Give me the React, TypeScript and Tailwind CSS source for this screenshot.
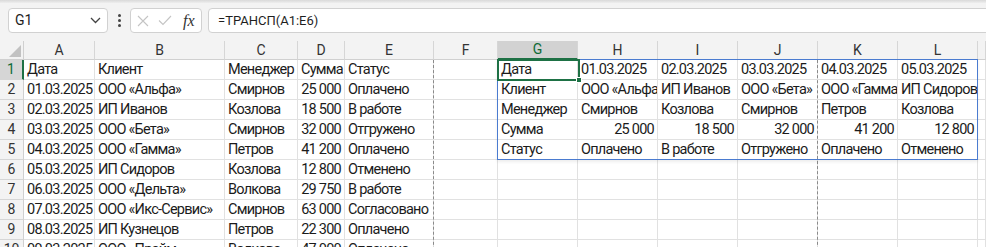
import React from 'react';

const COLS = ['A', 'B', 'C', 'D', 'E', 'F', 'G', 'H', 'I', 'J', 'K', 'L', ''];

const DATA: string[][] = [
  ['Дата', 'Клиент', 'Менеджер', 'Сумма', 'Статус', '', 'Дата', '01.03.2025', '02.03.2025', '03.03.2025', '04.03.2025', '05.03.2025', ''],
  ['01.03.2025', 'ООО «Альфа»', 'Смирнов', '25 000', 'Оплачено', '', 'Клиент', 'ООО «Альфа»', 'ИП Иванов', 'ООО «Бета»', 'ООО «Гамма»', 'ИП Сидоров', ''],
  ['02.03.2025', 'ИП Иванов', 'Козлова', '18 500', 'В работе', '', 'Менеджер', 'Смирнов', 'Козлова', 'Смирнов', 'Петров', 'Козлова', ''],
  ['03.03.2025', 'ООО «Бета»', 'Смирнов', '32 000', 'Отгружено', '', 'Сумма', '25 000', '18 500', '32 000', '41 200', '12 800', ''],
  ['04.03.2025', 'ООО «Гамма»', 'Петров', '41 200', 'Оплачено', '', 'Статус', 'Оплачено', 'В работе', 'Отгружено', 'Оплачено', 'Отменено', ''],
  ['05.03.2025', 'ИП Сидоров', 'Козлова', '12 800', 'Отменено', '', '', '', '', '', '', '', ''],
  ['06.03.2025', 'ООО «Дельта»', 'Волкова', '29 750', 'В работе', '', '', '', '', '', '', '', ''],
  ['07.03.2025', 'ООО «Икс-Сервис»', 'Смирнов', '63 000', 'Согласовано', '', '', '', '', '', '', '', ''],
  ['08.03.2025', 'ИП Кузнецов', 'Петров', '22 300', 'Оплачено', '', '', '', '', '', '', '', ''],
  ['09.03.2025', 'ООО «Прайм»', 'Волкова', '47 000', 'Оплачено', '', '', '', '', '', '', '', ''],
];

const isNum = (s: string) => /^\d+ \d+$/.test(s);

function Chevron() {
  return (
    <svg width="11" height="7" viewBox="0 0 11 7" fill="none">
      <path d="M1 1l4.5 4.5L10 1" stroke="#444" strokeWidth="1.3" />
    </svg>
  );
}

export default function App() {
  return (
    <div className="w-[986px] h-[247px] overflow-hidden bg-[#f3f3f3] font-['Roboto',sans-serif]">
      <div className="h-[3px] bg-gradient-to-b from-[#d9d9d9] to-[#eeeeee]" />
      {/* formula bar */}
      <div className="flex items-center h-[25px] mt-[5px] pl-[8px]">
        <div className="flex items-center justify-between w-[100px] h-[25px] bg-white border border-[#d1d1d1] rounded-[4px] pl-[6px] pr-[6px]">
          <span className="text-[14px] text-[#1f1f1f]">G1</span>
          <Chevron />
        </div>
        <div className="w-[22px] flex flex-col items-center justify-center gap-[2px]">
          <span className="block w-[3px] h-[3px] bg-[#444] rounded-full" />
          <span className="block w-[3px] h-[3px] bg-[#444] rounded-full" />
          <span className="block w-[3px] h-[3px] bg-[#444] rounded-full" />
        </div>
        <div className="flex items-center w-[72px] h-[25px] bg-white border border-[#d1d1d1] rounded-[4px] pl-[6px]">
          <svg width="12" height="12" viewBox="0 0 12 12" className="mr-[9px]">
            <path d="M1 1l10 10M11 1L1 11" stroke="#c4c4c4" strokeWidth="1.1" />
          </svg>
          <svg width="14" height="11" viewBox="0 0 14 11" className="mr-[11px]">
            <path d="M1 5.5l4 4L13 1" stroke="#c4c4c4" strokeWidth="1.1" fill="none" />
          </svg>
          <span className="font-['Liberation_Serif',serif] italic text-[16px] text-[#333] leading-none">fx</span>
        </div>
        <div className="flex items-center flex-1 h-[25px] ml-[6px] mr-[-12px] bg-white border border-[#d1d1d1] rounded-[4px] pl-[9px]">
          <span className="text-[13px] text-[#1f1f1f]">=ТРАНСП(A1:E6)</span>
        </div>
      </div>

      {/* sheet */}
      <div className="relative mt-[8px] bg-white">
        <div className="grid grid-cols-[24px_71px_130px_73px_47px_89px_64px_repeat(6,80px)_1fr]">
          {/* column headers */}
          <div className="relative h-[19px] bg-[#f3f3f3] border-r border-b border-[#d0d0d0]">
            <svg width="12" height="12" viewBox="0 0 12 12" className="absolute right-[2px] bottom-[2px]">
              <path d="M12 0L12 12L0 12Z" fill="#c2c2c2" />
            </svg>
          </div>
          {COLS.map((c, i) => (
            <div
              key={c + i}
              className={
                'h-[19px] flex items-center justify-center text-[14px] border-r border-[#d6d6d6] ' +
                (c === 'G'
                  ? 'bg-[#d2d2d2] text-[#0f6b37] border-b-2 border-b-[#1e7145]'
                  : 'bg-[#f3f3f3] text-[#333] border-b border-b-[#d0d0d0]')
              }
            >
              {c}
            </div>
          ))}
          {DATA.map((row, r) => (
            <React.Fragment key={r}>
              <div
                className={
                  'h-[20px] flex items-center justify-center text-[14px] border-b border-[#d6d6d6] ' +
                  (r === 0
                    ? 'bg-[#d6d6d6] text-[#0f6b37] border-r-2 border-r-[#1e7145]'
                    : 'bg-[#f3f3f3] text-[#333] border-r border-r-[#d0d0d0]')
                }
              >
                {r + 1}
              </div>
              {row.map((v, c) => (
                <div
                  key={c}
                  className={
                    "h-[20px] leading-[20px] overflow-hidden whitespace-nowrap border-r border-b border-[#e1e1e1] text-[14.5px] tracking-[-0.75px] text-[#1b1b1b] font-['Roboto',sans-serif] " +
                    (isNum(v) ? 'text-right pr-[3px]' : 'text-left pl-[3px]')
                  }
                >
                  {v}
                </div>
              ))}
            </React.Fragment>
          ))}
        </div>

        {/* page break lines */}
        <div className="absolute left-[433px] top-[19px] bottom-0 border-l border-dashed border-[#8a8a8a]" />
        <div className="absolute left-[817px] top-[19px] bottom-0 border-l border-dashed border-[#8a8a8a]" />

        {/* range border */}
        <div className="absolute left-[497px] top-[18px] w-[481px] h-[101px] border border-[#4a7bd0] shadow-[0_2px_3px_rgba(0,0,0,0.07)]" />
        {/* active cell */}
        <div className="absolute left-[497px] top-[18px] w-[83px] h-[22px] border-2 border-[#1e7145]" />
        <div className="absolute left-[576px] top-[36px] w-[6px] h-[6px] bg-[#1e7145] border border-white" />
      </div>
    </div>
  );
}
